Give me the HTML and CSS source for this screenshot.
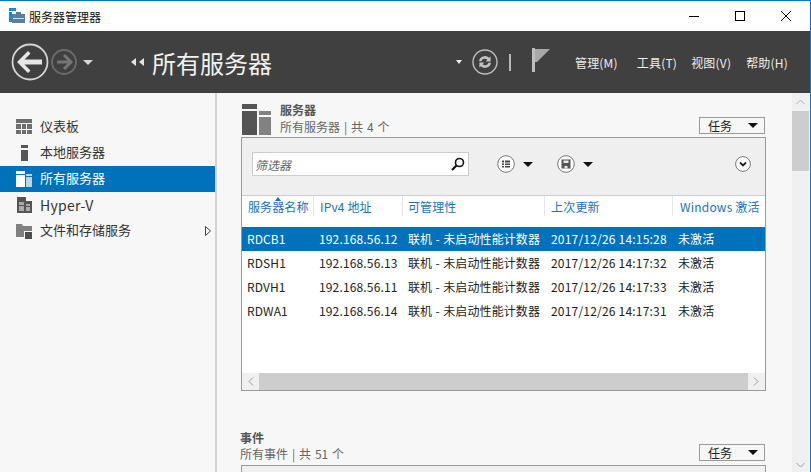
FILE: index.html
```html
<!DOCTYPE html>
<html lang="zh-CN">
<head>
  <meta charset="UTF-8" />
  <title>服务器管理器</title>
  <link rel="stylesheet" href="styles.css">
</head>
<body>
  <div class="window">
    <div class="titlebar">
      <svg class="app-icon" width="16" height="16" viewBox="0 0 16 16">
        <rect x="0" y="0" width="7" height="3" fill="#1e88d2"/>
        <rect x="0" y="4" width="3" height="10" fill="#1e88d2"/>
        <rect x="3" y="6" width="13" height="9" fill="#5a7f9c"/>
        <rect x="4" y="10" width="11" height="1" fill="#cfe0ec"/>
        <rect x="7" y="4" width="5" height="2" fill="#5a7f9c"/>
      </svg>
      <span class="app-title">服务器管理器</span>
      <div class="win-buttons">
        <svg width="12" height="12" viewBox="0 0 12 12"><path d="M1 6.500h10" stroke="#000" fill="none"/></svg>
        <svg width="12" height="12" viewBox="0 0 12 12"><rect x="1.500" y="1.500" width="9" height="9" stroke="#000" fill="none"/></svg>
        <svg width="12" height="12" viewBox="0 0 12 12"><path d="M1 1l10 10M11 1L1 11" stroke="#000" fill="none"/></svg>
      </div>
    </div>

    <div class="header">
      <svg class="nav-back" width="38" height="38" viewBox="0 0 38 38">
        <circle cx="19" cy="19" r="17.500" stroke="#d4d4d4" stroke-width="1.800" fill="none"/>
        <path d="M17 8l2.500 2.500-6 6H31v5H13.500l6 6L17 30 6 19z" fill="#e6e6e6"/>
      </svg>
      <svg class="nav-forward" width="26" height="26" viewBox="0 0 26 26">
        <circle cx="13" cy="13" r="12" stroke="#6c6c6c" stroke-width="1.800" fill="none"/>
        <path d="M20 13H6M13 6l7 7-7 7" stroke="#757575" stroke-width="3" fill="none"/>
      </svg>
      <span class="tri-down light nav-drop"></span>
      <span class="crumb-arrows">
        <svg width="14" height="8" viewBox="0 0 14 8"><path d="M5 0v8L0 4zM13 0v8L8 4z" fill="#e4e4e4"/></svg>
      </span>
      <span class="page-title">所有服务器</span>
      <div class="header-right">
        <span class="tri-down light small"></span>
        <svg class="refresh" width="26" height="26" viewBox="0 0 26 26">
          <circle cx="13" cy="13" r="12" stroke="#bdbdbd" stroke-width="1.400" fill="none"/>
          <path d="M7 12.200a6 6 0 0 1 10.100-3.400l1.500-1.300v4.900h-4.900l1.700-1.600a3.600 3.600 0 0 0-6 1.400zM19 13.800a6 6 0 0 1-10.100 3.400l-1.500 1.300v-4.900h4.900l-1.700 1.600a3.600 3.600 0 0 0 6-1.400z" fill="#c4c4c4"/>
        </svg>
        <span class="sep"></span>
        <svg class="flag" width="18" height="24" viewBox="0 0 18 24">
          <rect x="0" y="0" width="3" height="24" fill="#bdbdbd"/>
          <path d="M3 1h15L5 14H3z" fill="#a8a8a8"/>
        </svg>
        <nav class="menu">
          <span class="m1">管理(M)</span>
          <span class="m2">工具(T)</span>
          <span class="m3">视图(V)</span>
          <span class="m4">帮助(H)</span>
        </nav>
      </div>
    </div>

    <div class="body">
      <aside class="sidebar">
        <div class="nav-item">
          <svg width="16" height="16" viewBox="0 0 16 16"><path d="M0 0h16v4H0zM0 5h5v5H0zM6 5h4v5H6zM11 5h5v5h-5zM0 11h5v4H0zM6 11h4v4H6zM11 11h5v4h-5z" fill="#6e6e6e"/></svg>
          <span>仪表板</span>
        </div>
        <div class="nav-item">
          <svg width="16" height="16" viewBox="0 0 16 16"><path d="M5 0h7v3H5zM5 5h7v11H5z" fill="#555"/></svg>
          <span>本地服务器</span>
        </div>
        <div class="nav-item active">
          <svg width="16" height="16" viewBox="0 0 16 16"><path d="M0 0h9v3H0zM0 4h9v12H0z" fill="#fff"/><path d="M10 3h6v2h-6zM10 6h6v10h-6z" fill="#b8d6ee"/></svg>
          <span>所有服务器</span>
        </div>
        <div class="nav-item">
          <svg width="16" height="16" viewBox="0 0 16 16"><path d="M1 0h9v4h6v12H1z" fill="#555"/><path d="M3 5h5v3H3zM3 9h5v5H3zM10 7h4v2h-4zM10 10h4v4h-4z" fill="#aaa"/></svg>
          <span class="latin">Hyper-V</span>
        </div>
        <div class="nav-item">
          <svg width="16" height="16" viewBox="0 0 16 16"><path d="M0 1h6l1 2h9v5H8v6H0z" fill="#808080"/><path d="M9 9h7v7H9z" fill="#4f4f4f"/></svg>
          <span>文件和存储服务</span>
          <svg class="expand" width="6" height="10" viewBox="0 0 6 10"><path d="M.5.5v9l5-4.500z" fill="none" stroke="#444"/></svg>
        </div>
      </aside>

      <main class="content">
        <section class="servers">
          <div class="section-head">
            <svg class="section-icon" width="30" height="31" viewBox="0 0 30 31">
              <path d="M0 0h15v5H0zM0 7h15v24H0z" fill="#555"/>
              <path d="M17 7h12v4H17zM17 13h12v18H17z" fill="#828282"/>
            </svg>
            <div class="section-text">
              <div class="section-title">服务器</div>
              <div class="section-sub">所有服务器 | 共 4 个</div>
            </div>
            <button class="tasks">任务<span class="tri-down"></span></button>
          </div>

          <div class="panel">
            <div class="toolbar">
              <div class="filter">
                <span class="filter-text">筛选器</span>
                <svg width="14" height="14" viewBox="0 0 14 14"><circle cx="8.500" cy="5.500" r="4" stroke="#111" stroke-width="1.600" fill="none"/><path d="M5.500 8.500L1 13" stroke="#111" stroke-width="2.200"/></svg>
              </div>
              <div class="tool t-list">
                <svg width="18" height="18" viewBox="0 0 18 18"><circle cx="9" cy="9" r="8.300" fill="#fff" stroke="#777"/><path d="M5 5.500h2v2H5zM8 5.500h5v2H8zM5 8.500h2v1.500H5zM8 8.500h5v1.500H8zM5 11h2v1.500H5zM8 11h5v1.500H8z" fill="#444"/></svg>
                <span class="tri-down"></span>
              </div>
              <div class="tool t-save">
                <svg width="18" height="18" viewBox="0 0 18 18"><circle cx="9" cy="9" r="8.300" fill="#fff" stroke="#777"/><path d="M4.500 4.500h9v9h-9z" fill="#555"/><path d="M6.500 5.500h5v2.500h-5zM7.500 11h3v2.500h-3z" fill="#e8e8e8"/></svg>
                <span class="tri-down"></span>
              </div>
              <svg class="collapse" width="16" height="16" viewBox="0 0 16 16"><circle cx="8" cy="8" r="7.400" fill="#fff" stroke="#777"/><path d="M5 6.500l3 3 3-3" fill="none" stroke="#222" stroke-width="1.800"/></svg>
            </div>

            <div class="grid-wrap">
              <div class="row head">
                <div class="sort-col">服务器名称<span class="sort-mark"></span></div>
                <div>IPv4 地址</div>
                <div>可管理性</div>
                <div>上次更新</div>
                <div>Windows 激活</div>
              </div>
              <div class="row selected">
                <div>RDCB1</div><div>192.168.56.12</div><div>联机 - 未启动性能计数器</div><div>2017/12/26 14:15:28</div><div>未激活</div>
              </div>
              <div class="row">
                <div>RDSH1</div><div>192.168.56.13</div><div>联机 - 未启动性能计数器</div><div>2017/12/26 14:17:32</div><div>未激活</div>
              </div>
              <div class="row">
                <div>RDVH1</div><div>192.168.56.11</div><div>联机 - 未启动性能计数器</div><div>2017/12/26 14:17:33</div><div>未激活</div>
              </div>
              <div class="row">
                <div>RDWA1</div><div>192.168.56.14</div><div>联机 - 未启动性能计数器</div><div>2017/12/26 14:17:31</div><div>未激活</div>
              </div>
            </div>

            <div class="hscroll">
              <svg width="6" height="9" viewBox="0 0 6 9"><path d="M5 .5L1 4.500l4 4" fill="none" stroke="#9a9a9a"/></svg>
              <div class="hthumb"></div>
              <svg width="6" height="9" viewBox="0 0 6 9"><path d="M1 .5l4 4-4 4" fill="none" stroke="#9a9a9a"/></svg>
            </div>
          </div>
        </section>

        <section class="events">
          <div class="section-head plain">
            <div class="section-text">
              <div class="section-title">事件</div>
              <div class="section-sub">所有事件 | 共 51 个</div>
            </div>
            <button class="tasks">任务<span class="tri-down"></span></button>
          </div>
          <div class="panel-stub"></div>
        </section>
      </main>

      <div class="vscroll">
        <svg width="9" height="6" viewBox="0 0 9 6"><path d="M.5 5l4-4 4 4" fill="none" stroke="#b0b0b0"/></svg>
        <div class="vthumb"></div>
        <svg class="down" width="9" height="6" viewBox="0 0 9 6"><path d="M.5 1l4 4 4-4" fill="none" stroke="#9a9a9a"/></svg>
      </div>
    </div>
  </div>
</body>
</html>
```

FILE: styles.css
```css
html, body {
  margin: 0;
  padding: 0;
  height: 100%;
  overflow: hidden;
}
body {
  font-family: "Noto Sans CJK SC", "Noto Sans", sans-serif;
  font-size: 12px;
  color: #222;
  background: #fff;
}
.window {
  height: 472px;
  display: flex;
  flex-direction: column;
  border-top: 1px solid #0078d7;
  border-right: 1px solid #0078d7;
  box-sizing: border-box;
}

/* title bar */
.titlebar {
  height: 30px;
  flex: none;
  display: flex;
  align-items: center;
  padding-left: 9px;
  background: #fff;
}
.app-icon {
  margin-right: 4px;
}
.app-title {
  font-size: 12px;
  color: #111;
}
.win-buttons {
  margin-left: auto;
  display: flex;
  gap: 34px;
  padding-right: 18px;
}

/* dark header */
.header {
  height: 62px;
  flex: none;
  display: flex;
  align-items: center;
  background: #404040;
  color: #fff;
  padding-left: 11px;
}
.nav-forward {
  margin-left: 2px;
}
.nav-drop {
  margin-left: 6px;
}
.crumb-arrows {
  margin-left: 38px;
  display: flex;
}
.page-title {
  font-size: 24px;
  margin-left: 7px;
  color: #f2f2f2;
}
.header-right {
  margin-left: auto;
  display: flex;
  align-items: center;
}
.header-right .small {
  margin-right: 10px;
}
.sep {
  width: 2px;
  height: 17px;
  background: #b8b8b8;
  margin: 0 21px 0 11px;
}
.flag {
  margin-top: -4px;
}
.menu {
  display: flex;
  font-size: 12px;
  letter-spacing: 0.2px;
  color: #eee;
  margin-left: 25px;
  padding-right: 22px;
}
.m2 { margin-left: 19px; }
.m3 { margin-left: 14px; }
.m4 { margin-left: 15px; }

/* triangles */
.tri-down {
  display: inline-block;
  width: 0;
  height: 0;
  border-left: 5px solid transparent;
  border-right: 5px solid transparent;
  border-top: 5px solid #111;
}
.tri-down.light {
  border-top-color: #d8d8d8;
}
.tri-down.small {
  border-left-width: 3px;
  border-right-width: 3px;
  border-top-width: 4px;
  border-top-color: #eee;
}

/* body */
.body {
  flex: 1;
  min-height: 0;
  display: flex;
  background: #f7f7f7;
}
.sidebar {
  width: 215px;
  flex: none;
  padding-top: 21px;
  box-sizing: content-box;
  border-right: 2px solid #d2d2d2;
}
.nav-item {
  height: 26px;
  display: flex;
  align-items: center;
  padding-left: 16px;
  font-size: 13px;
  color: #333;
}
.nav-item > span {
  margin-left: 8px;
  padding-bottom: 4px;
}
.nav-item > .latin {
  font-size: 14px;
  letter-spacing: 0.3px;
  padding-bottom: 0;
}
.nav-item.active {
  background: #0072bc;
  color: #fff;
}
.expand {
  margin-left: auto;
  margin-right: 4px;
}

.content {
  flex: 1;
  min-width: 0;
  padding: 8px 27px 0 24px;
  overflow: hidden;
}
.section-head {
  display: flex;
  height: 36px;
}
.section-icon {
  margin-top: 3px;
  margin-left: 1px;
}
.section-text {
  margin-left: 8px;
}
.section-title {
  font-weight: bold;
  font-size: 12px;
  line-height: 17px;
  color: #555;
}
.section-sub {
  font-size: 12px;
  line-height: 17px;
  word-spacing: 1.2px;
  color: #666;
}
.tasks {
  margin-left: auto;
  margin-top: 16px;
  width: 66px;
  height: 17px;
  padding: 0 6px 0 8px;
  display: flex;
  align-items: center;
  justify-content: space-between;
  border: 1px solid #999;
  background: #f7f7f7;
  font: 12px "Noto Sans CJK SC", sans-serif;
  color: #222;
  box-sizing: border-box;
}
.panel {
  border: 1px solid #999;
  background: #fff;
  height: 254px;
  display: flex;
  flex-direction: column;
  box-sizing: border-box;
  width: 525px;
}
.toolbar {
  height: 58px;
  flex: none;
  display: flex;
  align-items: flex-start;
  background: #efefef;
  border-bottom: 1px solid #ccc;
  box-sizing: border-box;
  padding-top: 14px;
  padding-left: 10px;
}
.filter {
  width: 217px;
  height: 24px;
  box-sizing: border-box;
  display: flex;
  align-items: center;
  justify-content: space-between;
  padding: 0 3px 0 2px;
  background: #fff;
  border: 1px solid #ccc;
}
.filter-text {
  font-style: italic;
  color: #666;
}
.tool {
  display: flex;
  align-items: center;
  gap: 8px;
  margin-top: 3px;
}
.t-list { margin-left: 28px; }
.t-save { margin-left: 24px; }
.collapse {
  margin-left: auto;
  margin-right: 14px;
  margin-top: 4px;
}
.grid-wrap {
  flex: 1;
  min-height: 0;
}
.row {
  display: grid;
  grid-template-columns: 72px 89px 142px 128px 1fr;
  height: 24px;
  align-items: center;
  font-size: 12px;
  white-space: nowrap;
  overflow: hidden;
}
.row > div {
  padding-left: 5px;
  padding-bottom: 2px;
  letter-spacing: 0.1px;
}
.row > div:nth-child(2) { letter-spacing: 0.15px; }
.row > div:nth-child(3) { word-spacing: 0.6px; }
.row > div:nth-child(4) { padding-left: 6px; letter-spacing: 0.2px; }
.row.head {
  height: 31px;
  color: #1a72bb;
}
.row.head > div {
  align-self: start;
  box-sizing: border-box;
  height: 20px;
  line-height: 22px;
  padding-bottom: 0;
  border-right: 1px solid #e6e6e6;
}
.row.head > div:first-child { padding-left: 6px; }
.row.head > div:nth-child(2) { padding-left: 6px; }
.row.head > div:last-child {
  border-right: 0;
  padding-left: 7px;
  letter-spacing: 0.2px;
}
.sort-col {
  position: relative;
}
.sort-mark {
  position: absolute;
  left: 33px;
  top: 1px;
  width: 0;
  height: 0;
  border-left: 3px solid transparent;
  border-right: 3px solid transparent;
  border-bottom: 4px solid #1a72bb;
}
.row.selected {
  background: #0072bc;
  color: #fff;
}
.hscroll {
  height: 17px;
  flex: none;
  display: flex;
  align-items: center;
  background: #f0f0f0;
  padding: 0 6px;
}
.hthumb {
  flex: 1;
  height: 17px;
  background: #cdcdcd;
  margin: 0 5px;
}
.events {
  margin-top: 38px;
}
.events .section-sub {
  line-height: 15px;
}
.events .tasks {
  margin-top: 15px;
}
.section-head.plain .section-text {
  margin-left: -1px;
}
.panel-stub {
  height: 40px;
  width: 525px;
  box-sizing: border-box;
  border: 1px solid #999;
  background: #efefef;
}
.vscroll {
  width: 17px;
  flex: none;
  margin-right: 1px;
  background: #f0f0f0;
  display: flex;
  flex-direction: column;
  align-items: center;
  padding-top: 6px;
  box-sizing: border-box;
}
.vthumb {
  align-self: stretch;
  height: 60px;
  margin-top: 6px;
  background: #cdcdcd;
}
.vscroll .down {
  margin-top: auto;
  margin-bottom: 4px;
}
```
